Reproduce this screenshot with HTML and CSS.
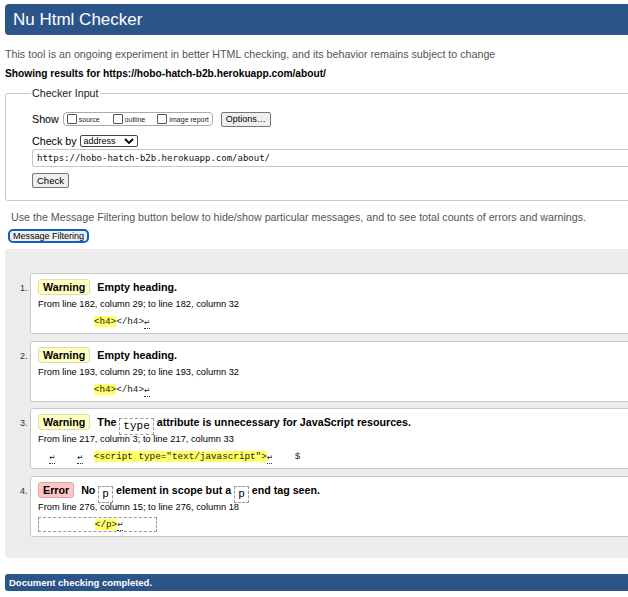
FILE: index.html
```html
<!DOCTYPE html>
<html lang="en">
<head>
<meta charset="utf-8">
<title>Nu Html Checker</title>
<link rel="stylesheet" href="styles.css">
</head>
<body>
<div class="page">
  <header class="masthead"><h1>Nu Html Checker</h1></header>
  <p class="intro">This tool is an ongoing experiment in better HTML checking, and its behavior remains subject to change</p>
  <p class="showing">Showing results for https://hobo-hatch-b2b.herokuapp.com/about/</p>

  <fieldset class="inputs">
    <legend>Checker Input</legend>
    <div class="row">
      <span class="lbl">Show</span>
      <span class="opts">
        <label class="opt opt-source"><span class="cb"></span>source</label>
        <label class="opt opt-outline"><span class="cb"></span>outline</label>
        <label class="opt"><span class="cb"></span>image report</label>
      </span>
      <button class="btn btn-options">Options…</button>
    </div>
    <div class="row row-by">
      <span class="lbl">Check by</span>
      <span class="select">address<svg class="chev" viewBox="0 0 10 6" width="10" height="6"><path d="M1 1 L5 5 L9 1" fill="none" stroke="#000" stroke-width="1.8"/></svg></span>
    </div>
    <div class="url">https://hobo-hatch-b2b.herokuapp.com/about/</div>
    <button class="btn btn-check">Check</button>
  </fieldset>

  <p class="filter-note">Use the Message Filtering button below to hide/show particular messages, and to see total counts of errors and warnings.</p>
  <button class="filter-btn">Message Filtering</button>

  <section class="results">
    <ol class="msgs">
      <li class="msg">
        <p class="head"><strong class="badge warn">Warning</strong><span class="txt">Empty heading.</span></p>
        <p class="loc">From line 182, column 29; to line 182, column 32</p>
        <p class="extract"><code>          <b class="hl">&lt;h4&gt;</b>&lt;/h4&gt;<span class="lf">↵</span></code></p>
      </li>
      <li class="msg">
        <p class="head"><strong class="badge warn">Warning</strong><span class="txt">Empty heading.</span></p>
        <p class="loc">From line 193, column 29; to line 193, column 32</p>
        <p class="extract"><code>          <b class="hl">&lt;h4&gt;</b>&lt;/h4&gt;<span class="lf">↵</span></code></p>
      </li>
      <li class="msg">
        <p class="head"><strong class="badge warn">Warning</strong><span class="txt">The <code class="tok">type</code> attribute is unnecessary for JavaScript resources.</span></p>
        <p class="loc">From line 217, column 3; to line 217, column 33</p>
        <p class="extract"><code>  <span class="lf">↵</span>    <span class="lf">↵</span>  <b class="hl">&lt;script type="text/javascript"&gt;</b><span class="lf">↵</span>    $</code></p>
      </li>
      <li class="msg">
        <p class="head"><strong class="badge err">Error</strong><span class="txt">No <code class="tok">p</code> element in scope but a <code class="tok">p</code> end tag seen.</span></p>
        <p class="loc">From line 276, column 15; to line 276, column 18</p>
        <p class="extract"><code class="boxed">          <b class="hl">&lt;/p&gt;</b><span class="lf">↵</span>      </code></p>
      </li>
    </ol>
  </section>

  <footer class="done">Document checking completed.</footer>
</div>
</body>
</html>
```

FILE: styles.css
```css
html { overflow: hidden; }
body {
  margin: 0;
  font-family: "Liberation Sans", Arial, sans-serif;
  color: #000;
  background: #fff;
}
.page {
  width: 720px;
  padding: 4px 0 0 5px;
}
.masthead {
  background: #2b5589;
  border-radius: 4px;
  height: 31px;
  display: flex;
  align-items: center;
  padding-left: 8px;
}
.masthead h1 {
  margin: 0;
  color: #fff;
  font-size: 17px;
  font-weight: normal;
}
.intro {
  margin: 13px 0 0;
  font-size: 10.7px;
  line-height: 13px;
  color: #555;
}
.showing {
  margin: 6px 0 0;
  font-size: 10.2px;
  line-height: 13px;
  font-weight: bold;
}
.inputs {
  margin: 7px 0 0;
  border: 1px solid #c8c8c8;
  border-radius: 3px;
  padding: 12px 0 12px 26px;
  font-size: 11px;
}
.inputs legend {
  font-size: 10.7px;
  line-height: 13px;
  padding: 0 1px;
  margin-left: -1px;
  color: #222;
}
.row {
  display: flex;
  align-items: center;
  gap: 3px;
  height: 14px;
}
.row-by { margin-top: 9px; height: 12px; }
.lbl { font-size: 10.7px; }
.opts {
  display: flex;
  align-items: center;
  height: 12px;
  border: 1px solid #aaa;
  border-radius: 4px;
  padding: 0 3px;
  width: 142px;
  box-sizing: content-box;
  margin-left: 1px;
}
.opt {
  display: flex;
  align-items: center;
  font-size: 7px;
  color: #222;
  white-space: nowrap;
}
.opt-source { width: 46px; }
.opt-outline { width: 45px; }
.cb {
  width: 8px;
  height: 8px;
  border: 1px solid #555;
  border-radius: 1px;
  margin-right: 2px;
  background: #fff;
}
.btn {
  font-family: "Liberation Sans", Arial, sans-serif;
  font-size: 9px;
  background: #efefef;
  border: 1px solid #767676;
  border-radius: 2px;
  padding: 0 4px;
  height: 15px;
  line-height: 13px;
  color: #000;
}
.btn-options { margin-left: 5px; }
.select {
  display: flex;
  align-items: center;
  justify-content: space-between;
  width: 50px;
  height: 10px;
  padding: 0 3px;
  border: 1px solid #444;
  border-radius: 2px;
  font-size: 9px;
}
.chev { display: block; }
.url {
  margin-top: 2px;
  height: 16px;
  line-height: 16px;
  border: 1px solid #c8c8c8;
  border-right: none;
  border-radius: 3px 0 0 3px;
  padding-left: 4px;
  font-family: "DejaVu Sans Mono", monospace;
  font-size: 9px;
  color: #111;
}
.btn-check {
  margin-top: 6px;
  height: 15px;
  display: block;
  padding: 0 4px;
  font-size: 9.5px;
}
.filter-note {
  margin: 10px 0 0;
  padding-left: 6px;
  font-size: 10.7px;
  line-height: 13px;
  color: #555;
}
.filter-btn {
  margin: 5px 0 0 3px;
  font-family: "Liberation Sans", Arial, sans-serif;
  font-size: 9px;
  height: 14px;
  padding: 0 3px;
  background: #efefef;
  border: 2px solid #1160c8;
  border-radius: 5px;
  color: #000;
  line-height: 10px;
}
.results {
  margin-top: 6px;
  background: #ececec;
  border-radius: 4px;
  padding: 24px 0 21px;
}
.msgs {
  margin: 0;
  padding-left: 25px;
}
.msg {
  background: #fff;
  border: 1px solid #c8c8c8;
  border-radius: 3px;
  padding: 5px 7px 6px;
  margin-bottom: 6.6px;
  height: 48px;
}
.msg:last-child { margin-bottom: 0; }
.msg::marker { font-size: 9px; color: #333; }
.msg p { margin: 0; }
.head {
  font-size: 11px;
  line-height: 17px;
  height: 17px;
  white-space: nowrap;
}
.badge {
  display: inline-block;
  padding: 0 4px;
  line-height: 14px;
  border-radius: 3px;
  margin-right: 7px;
  font-weight: bold;
  font-size: 10.7px;
}
.badge.warn { background: #ffffc0; border: 1px solid #dcdcb0; }
.badge.err { background: #ffc4c4; border: 1px solid #dca4a4; }
.txt { font-weight: bold; font-size: 10.7px; }
.tok {
  display: inline-block;
  font-family: "Liberation Mono", "Courier New", monospace;
  font-weight: normal;
  font-size: 11px;
  line-height: 15px;
  padding: 0 3px;
  border: 1px dashed #999;
  vertical-align: -3px;
}
.loc {
  font-size: 9.3px;
  line-height: 12px;
  margin-top: 2px !important;
}
.extract {
  margin-top: 2px !important;
  line-height: 14px;
}
.extract code {
  font-family: "Liberation Mono", "Courier New", monospace;
  font-size: 9.3px;
  white-space: pre;
  color: #222;
}
.extract .boxed {
  display: inline-block;
  border: 1px dashed #999;
  line-height: 13px;
}
.hl {
  background: #ffff66;
  font-weight: normal;
}
.lf {
  display: inline-block;
  width: 5.58px;
  text-align: center;
  overflow: hidden;
  vertical-align: bottom;
  font-family: "DejaVu Sans", sans-serif;
  font-size: 7.5px;
  border-bottom: 1px dotted #333;
  line-height: 10px;
}
.done {
  margin-top: 16px;
  background: #2b5589;
  border-radius: 3px;
  height: 17px;
  line-height: 17px;
  padding-left: 4px;
  color: #fff;
  font-weight: bold;
  font-size: 9.5px;
}
```
